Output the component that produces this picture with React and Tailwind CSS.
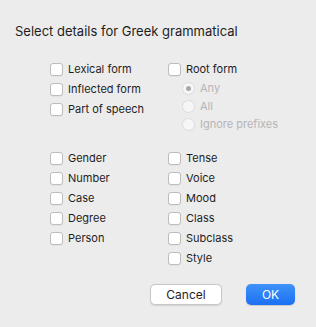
function Check({ label }) {
  return (
    <div className="flex h-5 items-center">
      <span className="h-[13px] w-[13px] rounded-[3px] border border-[#bdbdbd] bg-white shadow-[0_0.5px_0.5px_rgba(0,0,0,0.08)]"></span>
      <span className="ml-[5px] text-[11px] text-[#1e1e1e]">{label}</span>
    </div>
  );
}

function Radio({ label, selected }) {
  return (
    <div className="flex h-[18px] items-center">
      <span className="flex h-[13px] w-[13px] items-center justify-center rounded-full border border-[#dcdcdc] bg-[#f6f6f6]">
        {selected && <span className="h-[5px] w-[5px] rounded-full bg-[#a8a8a8]"></span>}
      </span>
      <span className="ml-[5px] text-[11px] text-[#b5b5b5]">{label}</span>
    </div>
  );
}

export default function App() {
  return (
    <div className="h-[327px] w-[316px] bg-[#ececec] font-['Inter',sans-serif] antialiased">
      <div className="pl-[15px] pt-[23px] text-[13px] leading-4 text-[#1e1e1e]">
        Select details for Greek grammatical
      </div>

      <div className="mt-5 flex pl-[50px]">
        <div className="w-[118px]">
          <Check label="Lexical form" />
          <Check label="Inflected form" />
          <Check label="Part of speech" />
        </div>
        <div>
          <Check label="Root form" />
          <div className="pl-[14px]">
            <Radio label="Any" selected />
            <Radio label="All" />
            <Radio label="Ignore prefixes" />
          </div>
        </div>
      </div>

      <div className="mt-[15px] flex pl-[50px]">
        <div className="w-[118px]">
          <Check label="Gender" />
          <Check label="Number" />
          <Check label="Case" />
          <Check label="Degree" />
          <Check label="Person" />
        </div>
        <div>
          <Check label="Tense" />
          <Check label="Voice" />
          <Check label="Mood" />
          <Check label="Class" />
          <Check label="Subclass" />
          <Check label="Style" />
        </div>
      </div>

      <div className="mt-4 flex justify-end gap-6 pr-[21px]">
        <button className="h-[21px] w-[72px] rounded-[5px] border border-[#c8c8c8] bg-white text-[12px] text-[#1e1e1e] shadow-[0_0.5px_1px_rgba(0,0,0,0.12)]">
          Cancel
        </button>
        <button className="h-[21px] w-[49px] rounded-[5px] bg-gradient-to-b from-[#3f93f9] to-[#1b6ff2] text-[12px] text-white shadow-[0_0.5px_1px_rgba(0,0,0,0.15)]">
          OK
        </button>
      </div>
    </div>
  );
}
